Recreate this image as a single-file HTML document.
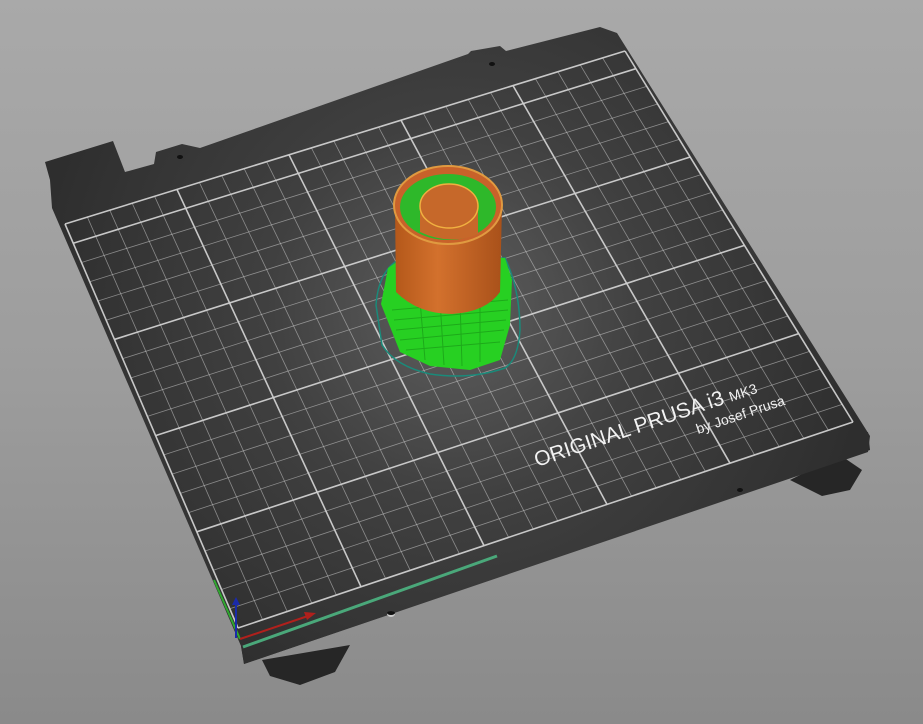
<!DOCTYPE html>
<html><head><meta charset="utf-8"><style>
html,body{margin:0;padding:0;width:923px;height:724px;overflow:hidden}
</style></head><body>
<svg width="923" height="724" viewBox="0 0 923 724" xmlns="http://www.w3.org/2000/svg">
<defs>
<linearGradient id="bg" x1="0" y1="0" x2="0" y2="1">
<stop offset="0" stop-color="#a9a9a9"/><stop offset="0.5" stop-color="#9d9d9d"/><stop offset="1" stop-color="#8a8a8a"/>
</linearGradient>
<radialGradient id="plate" cx="455" cy="310" r="420" gradientUnits="userSpaceOnUse">
<stop offset="0" stop-color="#5e5e5e"/><stop offset="0.45" stop-color="#404040"/><stop offset="1" stop-color="#2e2e2e"/>
</radialGradient>
<linearGradient id="cyl" x1="0" y1="0" x2="1" y2="0">
<stop offset="0" stop-color="#b4581a"/><stop offset="0.4" stop-color="#d3712d"/><stop offset="1" stop-color="#a9511a"/>
</linearGradient>
</defs>
<rect width="923" height="724" fill="url(#bg)"/>
<path d="M262,660 L270,676 L300,685 L335,672 L350,645 Z" fill="#262626"/>
<path d="M790,480 L822,496 L850,490 L862,470 L840,455 Z" fill="#262626"/>
<path d="M241,646 L244,664 L870,450 L868,432 Z" fill="#2a2a2a"/>
<path d="M45,162 L113,141 L125,172 L154,164 L156,152 L182,144 L200,148 L468,54 L471,51 L500,46 L506,51 L600,27 L617,33 L870,436 L868,452 L244,664 L241,646 L52,208 L50,180 Z" fill="url(#plate)"/>
<g id="grid" stroke="#d0d0d0" fill="none"></g>
<g fill="#111"><ellipse cx="180" cy="157" rx="3" ry="2"/><ellipse cx="492" cy="64" rx="3" ry="2"/><ellipse cx="740" cy="490" rx="3" ry="2"/><ellipse cx="391" cy="614" rx="4" ry="3" fill="#ccc"/><ellipse cx="391" cy="613" rx="4" ry="2"/></g>
<g fill="#f2f2f2" font-family="Liberation Sans, sans-serif">
<text x="537" y="467" font-size="21" transform="rotate(-18.6 537 467)">ORIGINAL PRUSA i3 <tspan font-size="14">MK3</tspan></text>
<text x="698" y="434" font-size="14" transform="rotate(-18.6 698 434)">by Josef Prusa</text>
</g>
<line x1="243" y1="647" x2="497" y2="556" stroke="#4aa87a" stroke-width="3"/>
<line x1="240" y1="639" x2="214" y2="580" stroke="#2fa82f" stroke-width="2"/>
<line x1="236" y1="638" x2="236" y2="602" stroke="#1a2aaa" stroke-width="2"/>
<path d="M232,605 L236,597 L240,605 Z" fill="#1a2aaa"/>
<line x1="240" y1="639" x2="308" y2="616" stroke="#b0201c" stroke-width="2"/>
<path d="M304,612 L316,613 L307,620 Z" fill="#b0201c"/>
<path d="M376,305 Q378,275 395,262 L505,258 Q520,290 520,330 Q518,360 505,368 Q470,380 430,374 Q395,366 382,345 Z" fill="none" stroke="#1a8a7a" stroke-width="1.5"/>
<path d="M381,304 L388,268 L405,256 L505,258 L512,280 L510,325 L500,360 L470,370 L430,366 L400,352 Z" fill="#27d022"/>
<g stroke="#1a9a18" stroke-width="1" opacity="0.7">
<line x1="392" y1="310" x2="508" y2="300"/><line x1="394" y1="320" x2="508" y2="310"/><line x1="396" y1="330" x2="506" y2="320"/><line x1="400" y1="340" x2="504" y2="330"/><line x1="406" y1="350" x2="500" y2="342"/>
<line x1="420" y1="300" x2="425" y2="360"/><line x1="440" y1="300" x2="444" y2="365"/><line x1="460" y1="300" x2="462" y2="366"/><line x1="480" y1="300" x2="480" y2="362"/>
</g>
<path d="M395,206 L396,292 Q418,314 452,314 Q486,312 500,292 L502,206 Z" fill="url(#cyl)"/>
<ellipse cx="448" cy="205" rx="54" ry="39" fill="#c8622a" stroke="#e09a40" stroke-width="2"/>
<ellipse cx="448" cy="207" rx="48" ry="33" fill="#2eb82a"/>
<path d="M420,207 L420,232 Q450,246 478,234 L478,207 Z" fill="#c6682a"/>
<ellipse cx="449" cy="206" rx="29" ry="22" fill="#c6682a" stroke="#f0b040" stroke-width="1.5"/>
</svg>
<script>
(function(){
var g=document.getElementById('grid');
var TL=[65,224],TR=[625,51],BR=[853,422],BL=[238,628];
function L(a,b,t){return [a[0]+(b[0]-a[0])*t,a[1]+(b[1]-a[1])*t];}
var s='';
for(var i=0;i<=25;i++){var t=i/25;var p=L(BL,BR,t),q=L(TL,TR,t);var maj=(i%5==0);
s+='<line x1="'+p[0]+'" y1="'+p[1]+'" x2="'+q[0]+'" y2="'+q[1]+'" stroke-width="'+(maj?1.6:0.8)+'" opacity="'+(maj?0.95:0.55)+'"/>';}
for(var j=0;j<=21;j++){var t=j/21;var p=L(BL,TL,t),q=L(BR,TR,t);var maj=(j%5==0||j==21);
s+='<line x1="'+p[0]+'" y1="'+p[1]+'" x2="'+q[0]+'" y2="'+q[1]+'" stroke-width="'+(maj?1.6:0.8)+'" opacity="'+(maj?0.95:0.55)+'"/>';}
g.innerHTML=s;
})();
</script>
</body></html>
